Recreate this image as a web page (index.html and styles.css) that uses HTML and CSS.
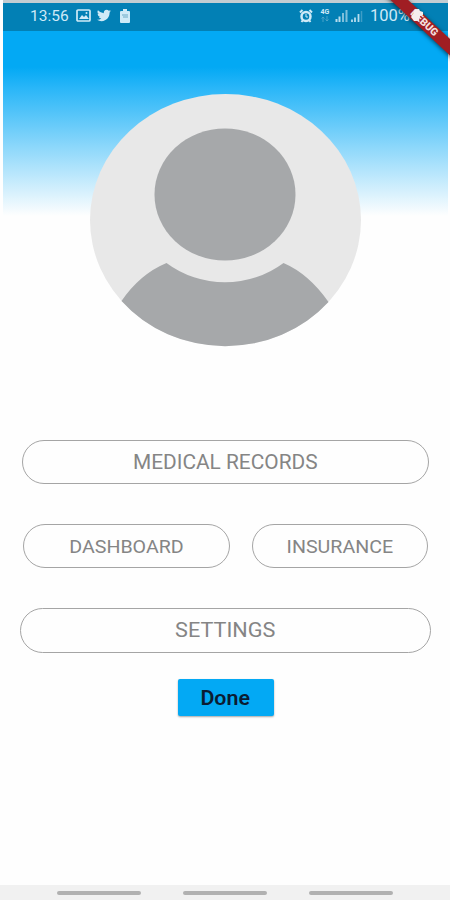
FILE: index.html
```html
<!DOCTYPE html>
<html lang="en">
<head>
    <meta charset="UTF-8">
    <meta name="viewport" content="width=device-width, initial-scale=1.0">
    <title>Profile</title>
    <link rel="stylesheet" href="styles.css">
</head>
<body>
    <div class="screen">
        <header class="header">
            <div class="status-bar">
                <span class="time">13:56</span>
                <svg class="icon-image" width="15" height="13" viewBox="0 0 15 13">
                    <rect x="1" y="1" width="13" height="11" rx="1" fill="none" stroke="#cfeaf7" stroke-width="1.7"/>
                    <path d="M3 10l3-4 2 2 2-2 3 4z" fill="#cfeaf7"/>
                    <circle cx="10.5" cy="4" r="1" fill="#cfeaf7"/>
                </svg>
                <svg class="icon-bird" width="14" height="13" viewBox="0 0 24 22">
                    <path d="M24 3.5a10 10 0 0 1-2.800.8A5 5 0 0 0 23.300 1.600a10 10 0 0 1-3.100 1.200A4.900 4.900 0 0 0 11.800 7.200 14 14 0 0 1 1.700 2a4.900 4.900 0 0 0 1.500 6.600A5 5 0 0 1 1 8a4.900 4.900 0 0 0 4 4.800 5 5 0 0 1-2.200.1 4.900 4.900 0 0 0 4.600 3.400A10 10 0 0 1 0 18.400 14 14 0 0 0 21.500 6z" fill="#cfeaf7"/>
                </svg>
                <svg class="icon-battery" width="10" height="14" viewBox="0 0 10 14">
                    <path d="M3 0h4v2h2q1 0 1 1v10q0 1-1 1H1q-1 0-1-1V3q0-1 1-1h2z" fill="#cfeaf7"/>
                    <path d="M2 6h6M3 8h5" stroke="#6aa9c5"/>
                </svg>
                <svg class="icon-alarm" width="14" height="14" viewBox="0 0 14 14">
                    <circle cx="7" cy="7.500" r="4.500" fill="none" stroke="#cfeaf7" stroke-width="2.500"/>
                    <path d="M1 3.500L3.500 1M13 3.500L10.500 1M2.500 13l1.500-2M11.500 13L10 11" stroke="#cfeaf7" stroke-width="2"/>
                    <path d="M7 5v3h2" fill="none" stroke="#cfeaf7"/>
                </svg>
                <span class="network">
                    <span>4G</span>
                    <svg width="8" height="6" viewBox="0 0 8 6">
                        <path d="M2 6V1M.5 2.500L2 1l1.500 1.500M6 0v5M4.500 3.500L6 5l1.500-1.500" fill="none" stroke="#4fa5ca" stroke-width=".9"/>
                    </svg>
                </span>
                <svg class="icon-signal" width="13" height="13" viewBox="0 0 13 13">
                    <path d="M1.500 13v-3M4.500 13V7.500" stroke="#b5dcee" stroke-width="2"/>
                    <path d="M8 13V4M11.500 13V1" stroke="#7fbfdb" stroke-width="2"/>
                </svg>
                <svg class="icon-signal second" width="12" height="12" viewBox="0 0 12 12">
                    <path d="M1 12V9.500M4 12V7.500M7.500 12V4" stroke="#b5dcee" stroke-width="1.800"/>
                    <path d="M10.500 12V1" stroke="#3e9dc6" stroke-width="1.500"/>
                </svg>
                <span class="percent">100%</span>
            </div>
        </header>

        <main class="content">
            <svg class="avatar" width="271" height="253" viewBox="0 0 271 253">
                <ellipse cx="135.500" cy="126" rx="135.500" ry="126" fill="#e8e8e8"/>
                <ellipse cx="135" cy="100.500" rx="70.500" ry="66" fill="#a6a8aa"/>
                <path d="M31.500 207Q50 180 76.500 169A93.500 87.500 0 0 0 193.500 169Q219 180 238.500 208A135.500 126 0 0 1 31.500 207z" fill="#a6a8aa"/>
            </svg>

            <button class="option records"><span>MEDICAL RECORDS</span></button>
            <div class="row">
                <button class="option dashboard"><span>DASHBOARD</span></button>
                <button class="option insurance"><span>INSURANCE</span></button>
            </div>
            <button class="option settings"><span>SETTINGS</span></button>
            <button class="done"><span>Done</span></button>
        </main>

        <footer class="nav-bar">
            <i></i>
            <i></i>
            <i></i>
        </footer>

        <!-- debug ribbon over the top right corner -->
        <div class="ribbon"><span>DEBUG</span></div>
        <svg class="ribbon-battery" width="12" height="14" viewBox="0 0 12 14">
            <path d="M4 1h4l1 2 3 1v3l-3 1-1 5H3L0 9l2-3z" fill="#f6eded"/>
        </svg>
    </div>
</body>
</html>
```
FILE: styles.css
```css
* {
    box-sizing: border-box;
}
body {
    margin: 0;
    font-family: Roboto, sans-serif;
    background: #fefefe;
}
.screen {
    position: relative;
    width: 450px;
    height: 900px;
    overflow: hidden;
    display: flex;
    flex-direction: column;
}
.header {
    height: 216px;
    margin: 0 2px 0 3px;
    border-top: 3px solid #c3cdd2;
    background: linear-gradient(#03a9f4 0, #03a9f4 64px, #29b6f8 85px, #8ed8fb 145px, #fefefe 213px);
}
.status-bar {
    height: 28px;
    display: flex;
    align-items: center;
    padding: 0 0 3px 27px;
    background: #0280b5;
    color: #cfeaf7;
}
.time {
    width: 39px;
    margin-right: 7px;
    font-size: 15.5px;
}
.icon-bird {
    margin-left: 6px;
}
.icon-battery {
    margin-left: 9px;
}
.icon-alarm {
    margin-left: 169px;
}
.network {
    width: 12px;
    margin-left: 6px;
    display: flex;
    flex-direction: column;
    align-items: center;
    font-size: 7px;
    font-weight: bold;
    line-height: 7px;
}
.icon-signal {
    margin-left: 4px;
}
.icon-signal.second {
    margin-left: 3px;
}
.percent {
    margin-left: 7px;
    font-size: 16.5px;
}
.content {
    flex: 1;
    display: flex;
    flex-direction: column;
    align-items: center;
    margin-top: -122px;
}
.avatar {
    flex: none;
    margin-bottom: 93px;
}
.option {
    flex: none;
    height: 44px;
    padding: 0;
    background: #fefefe;
    border: 1px solid #a5a5a5;
    border-radius: 22px;
    color: #858585;
    font-family: Roboto, sans-serif;
    font-size: 19.5px;
}
/* labels are a little wider than the font */
.option span,
.done span {
    display: inline-block;
    transform: scaleX(1.07);
}
.records {
    width: 407px;
    margin-left: 1px;
}
.row {
    display: flex;
    gap: 22px;
    margin: 40px 0 40px 1px;
}
.row .option {
    font-size: 18px;
}
.row .option span {
    transform: scaleX(1.09);
}
.dashboard {
    width: 207px;
}
.insurance {
    width: 176px;
}
.settings {
    width: 411px;
    height: 45px;
    margin-left: 1px;
    border-radius: 23px;
}
.settings span {
    transform: scaleX(1.11);
}
.done {
    width: 96px;
    height: 37px;
    margin-top: 26px;
    margin-left: 1px;
    padding: 0;
    background: #03a9f4;
    border: none;
    border-radius: 2px;
    box-shadow: 0 1px 2px rgba(0, 0, 0, 0.35);
    color: #0b1c33;
    font-family: Roboto, sans-serif;
    font-size: 20px;
    font-weight: 600;
}
.nav-bar {
    height: 15px;
    display: flex;
    justify-content: center;
    gap: 42px;
    padding-top: 6px;
    background: #f1f1f1;
}
.nav-bar i {
    width: 84px;
    height: 4px;
    border-radius: 2px;
    background: #b1b1b1;
}
.ribbon {
    position: absolute;
    top: 17px;
    left: 364px;
    width: 120px;
    height: 12px;
    background: #a01e23;
    box-shadow: 0 1px 4px rgba(0, 0, 0, 0.6);
    color: #f3dede;
    font-size: 10.5px;
    font-weight: 900;
    line-height: 12px;
    text-align: center;
    transform: rotate(43deg);
}
.ribbon-battery {
    position: absolute;
    top: 8px;
    left: 411px;
}
```
